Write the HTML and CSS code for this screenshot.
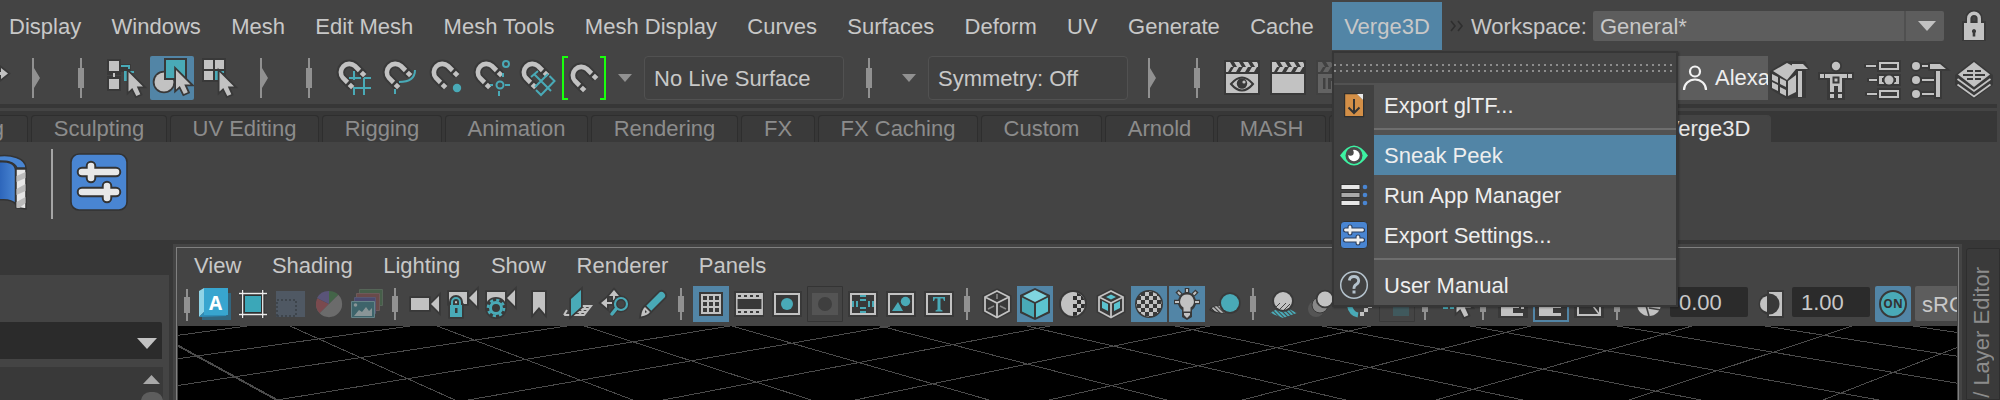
FILE: index.html
```html
<!DOCTYPE html>
<html lang="en">
<head>
<meta charset="utf-8">
<title>Verge3D menu</title>
<link rel="stylesheet" href="styles.css">
</head>
<body>
<svg class="defs" width="0" height="0">
  <defs>
    <g id="mag">
      <path class="halo" d="M364 75L355 66A8.5 8.5 0 0 0 343 78L352 87"/>
      <path class="mag-body" d="M359.5 70.5L355 66A8.5 8.5 0 0 0 343 78L347.5 82.5"/>
      <path class="mag-body" d="M361.3 72.3l3.4 3.4M349.3 84.3l3.4 3.4"/>
    </g>
    <path id="cur" class="g o" d="M128.5 72V91.5L132.3 88L136.3 96L140.3 94.2L136.8 86.4H143Z"/>
    <path id="handle" class="h" d="M2 0h2v10h2v20h-2v10h-2v-10h-2v-20h2z"/>
    <path id="vhandle" class="h" d="M2 0h2v8h2v16h-2v8h-2v-8h-2v-16h2z"/>
    <path id="collapse" class="h" d="M0 0h2v10l6 10l-6 10v10h-2z"/>
    <g id="clap">
      <path class="k" d="M1224 60h36v35h-36z"/>
      <path class="g" d="M1226 74h32v19h-32z"/>
      <path class="g" d="M1226 62h4l3 5h-7zM1234 62h5l3 5h-5zM1243 62h5l3 5h-5zM1252 62h5l1 2v3h-3zM1226 67h5l-3 5h-2zM1234 67h5l-3 5h-5zM1243 67h5l-3 5h-5zM1252 67h5l-3 5h-5z"/>
    </g>
    <g id="sliders">
      <path class="sl-o" d="M82 172h34M91 166v12M82 192h34M107 186v12"/>
      <path class="sl" d="M82 172h34M91 166v12M82 192h34M107 186v12"/>
    </g>
    <pattern id="chk" width="8" height="8" x="1149" y="304" patternUnits="userSpaceOnUse"><path fill="#c2c2c2" d="M0 0h4v4h4v4h-4v-4h-4z"/></pattern>
    <pattern id="chk2" width="8" height="8" x="1073" y="304" patternUnits="userSpaceOnUse"><path fill="#2e2e2e" d="M0 0h4v4h4v4h-4v-4h-4z"/></pattern>
    <pattern id="hat" width="3" height="3" patternTransform="rotate(-45)" patternUnits="userSpaceOnUse"><path fill="#c2c2c2" d="M0 0h1.8v3h-1.8z"/></pattern>
    <pattern id="hatt" width="3" height="3" patternTransform="rotate(-45)" patternUnits="userSpaceOnUse"><path fill="#49aab7" d="M0 0h2v3h-2z"/></pattern>
    <linearGradient id="blu"><stop offset="0" stop-color="#2a62b8"/><stop offset="1" stop-color="#4985d2"/></linearGradient>
  </defs>
</svg>

<div class="app">
  <header class="menubar">
    <nav class="menus">
      <span>Display</span><span>Windows</span><span>Mesh</span><span>Edit Mesh</span><span>Mesh Tools</span><span>Mesh Display</span><span>Curves</span><span>Surfaces</span><span>Deform</span><span>UV</span><span>Generate</span><span>Cache</span><span class="open">Verge3D</span>
    </nav>
    <svg class="more" width="14" height="12" viewBox="0 0 14 12"><path d="M1 1l4 5l-4 5M8 1l4 5l-4 5"/></svg>
    <span class="ws-label">Workspace:</span>
    <div class="ws-select"><span>General*</span><i><svg width="18" height="10" viewBox="0 0 18 10"><path class="g" d="M0 0h18l-9 10z"/></svg></i></div>
    <svg class="lock" width="24" height="32" viewBox="1962 11 24 32"><path class="k" d="M1962 22h24v20h-24z"/><path fill="none" stroke="#393939" stroke-width="7" d="M1969 26v-7a5 5 0 0 1 10 0v7"/><path fill="none" stroke="#c2c2c2" stroke-width="3.4" d="M1968.700 26v-6.500a5.300 5.300 0 0 1 10.600 0v6.500"/><path class="g" d="M1964 24h20v17h-20z"/><path class="k" d="M1974 30a2.300 2.300 0 0 1 1.300 4v3.500h-2.600v-3.500a2.300 2.300 0 0 1 1.300-4z"/></svg>
  </header>

  <section class="toolbar">
    <svg width="100" height="44" viewBox="0 56 100 44"><path class="g o" d="M-4 72h5v-4l7 5.500l-7 5.500v-4h-5z"/><use href="#collapse" x="32" y="58"/><use href="#handle" x="78" y="58"/></svg>
    <svg width="50" height="44" viewBox="100 56 50 44"><path class="k" d="M107 59h14v16h-14zM107 76h14v15h-14z"/><path class="g" d="M109 61h10v10h-10zM109 79h10v10h-10zM113 73h2v4h-2z"/><path class="k" d="M120 64h11v8h-11z"/><path class="t" d="M121 65h9v2h-9zM128 65h2v4h-2zM124 71h10v2h-7v8h-3z"/><use href="#cur"/></svg>
    <svg class="on" width="44" height="44" viewBox="150 56 44 44"><circle class="g o" cx="164" cy="82" r="9.500"/><path class="k" d="M164 58h23v22h-23z"/><path class="t" d="M166 60h19v18h-19z"/><use href="#cur" x="47.500" y="-2"/></svg>
    <svg width="136" height="44" viewBox="194 56 136 44"><path class="k" d="M202 58h24v24h-24z"/><path class="g" d="M204 60h9v9h-9zM215 60h9v9h-9zM204 71h9v9h-9z"/><path class="t" d="M215 71h9v2h-6v7h-3z"/><use href="#cur" x="91"/><use href="#collapse" x="260" y="58"/><use href="#handle" x="306" y="58"/></svg>
    <svg width="46" height="44" viewBox="330 56 46 44"><use href="#mag"/><path class="ts" d="M354 71v9M349 78h12M364 78h7M354 91v4M364 78v17M353 88h18M354 88v3M349 78h9"/></svg>
    <svg width="46" height="44" viewBox="376 56 46 44"><use href="#mag" x="46"/><path class="ts" d="M415 70c0 8-5 12-16 12M395 89v5"/></svg>
    <svg width="46" height="44" viewBox="422 56 46 44"><use href="#mag" x="93"/><circle class="t" cx="457" cy="88" r="4.200"/></svg>
    <svg width="46" height="44" viewBox="468 56 46 44"><use href="#mag" x="137"/><g class="ts"><circle cx="506" cy="64" r="3"/><circle cx="500" cy="85" r="3.500"/><path d="M505 85h5M493 85h-3M499 91v5M503 73v4" stroke-dasharray="5 2"/></g></svg>
    <svg width="48" height="44" viewBox="514 56 48 44"><use href="#mag" x="183"/><path class="ts" d="M531 77l7-6M534 74l17 17M541 81l-6 6M541 81l7-7M536 90l5 5l13.500-14l-5-5"/></svg>
    <svg width="44" height="44" viewBox="562 56 44 44"><path fill="none" stroke="#19ff0c" stroke-width="2" d="M568 57h-5v42h5M600 57h5v42h-5"/><use href="#mag" x="232" y="3"/></svg>
    <svg width="38" height="44" viewBox="606 56 38 44"><path fill="#919191" d="M618 74h14l-7 8z"/></svg>
    <div class="field">No Live Surface</div>
    <svg width="84" height="44" viewBox="844 56 84 44"><use href="#handle" x="866" y="58"/><path fill="#919191" d="M902 74h14l-7 8z"/></svg>
    <div class="field">Symmetry: Off</div>
    <svg width="92" height="44" viewBox="1128 56 92 44"><use href="#collapse" x="1148" y="58"/><use href="#handle" x="1194" y="58"/></svg>
    <svg width="46" height="44" viewBox="1220 56 46 44"><use href="#clap"/><path d="M1231 84q11-13 22 0q-11 13-22 0z" fill="#c2c2c2" stroke="#393939" stroke-width="2"/><circle class="k" cx="1242" cy="83.500" r="5.200"/><circle class="g" cx="1244" cy="82" r="1.600"/></svg>
    <svg width="46" height="44" viewBox="1266 56 46 44"><use href="#clap" x="46"/></svg>
    <svg width="366" height="44" viewBox="1312 56 366 44"><g opacity=".25"><use href="#clap" x="92"/><path class="k" d="M1323 78h2.500v11h-2.500zM1328 78h6v3h-3v8h-3z"/></g></svg>
    <div class="user"><svg width="26" height="28" viewBox="0 0 26 28"><g fill="none" stroke="#f2f2f2" stroke-width="2.200"><circle cx="13" cy="7.500" r="5"/><path d="M2 26a11 10.500 0 0 1 22 0"/></g></svg><span>Alexa</span></div>
    <svg width="45" height="44" viewBox="1768 56 45 44"><path class="k" d="M1770 71l16-10h19l5 9h-4v28h-10l-9 1l-17-10z"/><path class="g" d="M1773 71l14-8l5 2.500v3.500h4l-9 11zM1772 74l6 3v6l-6-3zM1780 78l6 3v6l-6-3zM1772 82l6 3v6l-6-3zM1780 87l6 3v6l-6-3zM1788 81l8-6v17l-8 4zM1792 64h11l5 5h-16zM1798 71h4v26h-4z"/></svg>
    <svg width="46" height="44" viewBox="1813 56 46 44"><circle class="k" cx="1836" cy="66" r="6"/><path class="k" d="M1818 72h36v8h-9v20h-18v-20h-9z"/><circle class="g" cx="1836" cy="66" r="4.200"/><path class="g" d="M1820 74h4v4h-4zM1848 74h4v4h-4zM1825 74h22v4h-5v14h-4v-6h-4v6h-4v-14h-5zM1830 94h4v4h-4zM1838 94h4v4h-4z"/><path class="k" d="M1832.500 76.500h7v7h-7z"/><path class="g" d="M1834.500 78.500h3v3h-3z"/></svg>
    <svg width="46" height="44" viewBox="1859 56 46 44"><path class="k" d="M1864 64h14v4h-14zM1867 78h10v4h-10zM1865 92h12v4h-12zM1877 60h24v12h-24zM1877 74h24v12h-24zM1877 88h24v12h-24z"/><path class="g" d="M1866 65h10v2h-10zM1869 79h8v2h-8zM1867 93h10v2h-10zM1879 62h20v8h-20zM1879 76h20v8h-20zM1879 90h20v8h-20z"/><path class="k" d="M1881 64h16v4h-16zM1881 92h16v4h-16zM1882 78h14v4h-14z"/><circle class="g o" cx="1889" cy="80" r="4.500"/></svg>
    <svg width="46" height="44" viewBox="1905 56 46 44"><path class="g o" d="M1922 65h6v2h-6zM1922 79h12v2h-12zM1922 93h12v2h-12zM1930 64h10l6 5h-16z"/><path class="k" d="M1934 71h8v28h-8z"/><path class="g" d="M1936 71h4v26h-4z"/><circle class="g o" cx="1916" cy="66" r="4"/><circle class="g o" cx="1916" cy="80" r="4"/><circle class="g o" cx="1916" cy="94" r="4"/></svg>
    <svg width="46" height="44" viewBox="1951 56 46 44"><path class="k" d="M1974 60l19 15v10l-19 14l-19-14v-10z"/><path class="g" d="M1974 62l16 12.500l-16 12.500l-16-12.500z"/><path fill="none" stroke="#c2c2c2" stroke-width="1.800" d="M1957.500 79l16.500 12l16.500-12M1957.500 84.500l16.500 12l16.500-12"/><path class="k" d="M1967 70h6v2h-6zM1975 70h6v2h-6zM1963 74h10v2h-10zM1975 74h10v2h-10zM1967 78h6v2h-6zM1975 78h6v2h-6z"/></svg>
  </section>

  <div class="tabs">
    <span class="w0">g</span><span class="w1">Sculpting</span><span class="w2">UV Editing</span><span class="w3">Rigging</span><span class="w4">Animation</span><span class="w5">Rendering</span><span class="w6">FX</span><span class="w7">FX Caching</span><span class="w8">Custom</span><span class="w9">Arnold</span><span class="w10">MASH</span><span class="w11"></span><span class="active">Verge3D</span>
  </div>

  <section class="shelf">
    <svg width="50" height="98" viewBox="0 142 50 98"><path fill="#4985d2" stroke="#333" stroke-width="1.500" d="M-2 156C10 154 26 158 26 168h-9C14 161 6 161-2 161z"/><path fill="url(#blu)" stroke="#333" stroke-width="1.500" d="M-2 162c10-1 17 1 17.500 8v34c-3-4-9-5-17.500-4z"/><path fill="#e6e6e6" stroke="#333" stroke-width="1.500" d="M16 169h10v40l-10-1.500z"/><path fill="#bbb" d="M16.500 176l9-4v6l-9 4zM16.500 189l9-5v7l-9 4zM16.500 202l9-5v6l-6 5h-3z"/></svg>
    <i class="shelf-line"></i>
    <svg width="80" height="98" viewBox="53 142 80 98"><rect x="71" y="154" width="56" height="56" rx="8" fill="#4985d2" stroke="#323232" stroke-width="1.600"/><use href="#sliders"/></svg>
  </section>

  <main class="work">
    <aside class="left">
      <div class="head"></div>
      <div class="panel">
        <div class="drop"><svg width="20" height="11" viewBox="0 0 20 11"><path class="g" d="M0 0h20l-10 11z"/></svg></div>
        <div class="scroll"><svg width="17" height="9" viewBox="0 0 17 9"><path fill="#a8a8a8" d="M0 9h17l-8.500-9z"/></svg><i></i></div>
      </div>
    </aside>

    <section class="frame">
      <div class="view">
        <nav class="vmenus"><span>View</span><span>Shading</span><span>Lighting</span><span>Show</span><span>Renderer</span><span>Panels</span></nav>
        <div class="vbar">
          <svg width="17" height="40" viewBox="178 284 17 40"><use href="#vhandle" x="184" y="289"/></svg>
          <div class="badge"><svg width="40" height="40" viewBox="195 284 40 40"><path fill="#32667f" d="M202 293h29v27h-29z"/><path fill="#8fd3e6" d="M199 291l5-3v24l-5 5z"/><path fill="#2e8db8" d="M199 317l5-5h24l-2 4z"/><path fill="#38a5cf" d="M204 288h24v27h-24z"/></svg><b>A</b></div>
          <svg width="38" height="40" viewBox="235 284 38 40"><path fill="none" stroke="#2f2f2f" stroke-width="3" d="M243 290v28M263 290v28M239 294h28M239 314h28"/><path fill="#3ba7b8" stroke="#2f2f2f" d="M244.500 295.500h17v17h-17z"/><path fill="none" stroke="#ececec" stroke-width="1.300" d="M242.600 290v28M262.700 290v28M239 293.500h28M239 314.500h28"/></svg>
          <svg width="38" height="40" viewBox="273 284 38 40"><path fill="#4f5863" d="M276 291h29v26h-29z"/><path fill="none" stroke="#3a3f46" stroke-dasharray="2 2" stroke-width="1.500" d="M277 316v-16h19v16z"/></svg>
          <svg width="38" height="40" viewBox="311 284 38 40"><path fill="#5f6868" d="M329 304l-9.300 9.300a13 13 0 0 1-3.700-9.300z"/><path fill="#7a4a4e" d="M329 304l-9.300 9.300a13 13 0 0 1-2.500-15z"/><path fill="#5a5478" d="M329 304l-12-6a13 13 0 0 1 12-7z"/><path fill="#436448" d="M329 304v-13a13 13 0 0 1 9.300 3.700z"/><path fill="#6b6b6b" d="M329 304l9.300-9.300a13 13 0 0 1-18.600 18.600z"/></svg>
          <svg width="38" height="40" viewBox="349 284 38 40"><g opacity=".85"><path fill="#47634b" stroke="#5a6b5c" d="M359.500 289.500h23v16h-23z"/><path fill="#704c4c" stroke="#755f5f" d="M356.500 293.500h23v17h-23z"/><path fill="#4c4c78" stroke="#5c5c7c" d="M354.500 297.500h21v16h-21z"/><path fill="#3d6a72" stroke="#6d8f94" d="M351.500 301.500h23v16h-23z"/><path fill="#96a4a6" d="M354 316l5-6l3 2l4-5l3 4l3-3v8z"/><circle fill="#96a4a6" cx="355.500" cy="305" r="1.800"/></g></svg>
          <svg width="18" height="40" viewBox="387 284 18 40"><use href="#vhandle" x="392" y="288"/></svg>
          <svg width="38" height="40" viewBox="405 284 38 40"><path class="g o" d="M411 298h18v12h-18zM431 304l8-8v16z"/></svg>
          <svg width="38" height="40" viewBox="443 284 38 40"><path class="g o" d="M449 292h18v12h-18zM469 298l8-8v16z"/><path fill="none" stroke="#393939" stroke-width="6" d="M452 305v-3a4 4 0 0 1 8 0v3"/><path class="t o" d="M450 305h12v12h-12z"/><path class="ts" d="M452 305v-3a4 4 0 0 1 8 0v3"/><path class="k" d="M455 308h2.500v5h-2.500z"/></svg>
          <svg width="38" height="40" viewBox="481 284 38 40"><path class="g o" d="M487 292h18v12h-18zM507 298l8-8v16z"/><circle class="k" cx="496" cy="308" r="11"/><circle cx="496" cy="308" r="8" fill="none" stroke="#49aab7" stroke-width="2.600" stroke-dasharray="3.100 3.180"/><circle cx="496" cy="308" r="5.500" fill="none" stroke="#49aab7" stroke-width="3"/></svg>
          <svg width="38" height="40" viewBox="519 284 38 40"><path class="g o" d="M533 292h12v22l-6-7l-6 7z"/></svg>
          <svg width="38" height="40" viewBox="557 284 38 40"><path fill="none" stroke="#c2c2c2" stroke-width="2" d="M564 315h20l7-9h-11M576 309h12M574 312h12M567 310l-3 5M579 315l7-9M572 315l6-7"/><path class="t o" d="M571 299l10-9v17l-10 9z"/></svg>
          <svg width="38" height="40" viewBox="595 284 38 40"><path class="g o" d="M601 303l6-5v4h5v2h-5v4zM614 290l5 6h-4v4h-2v-4h-4z"/><circle cx="621" cy="304" r="6" fill="none" stroke="#393939" stroke-width="5"/><path stroke="#393939" stroke-width="6" d="M616 309l-5 5"/><circle cx="621" cy="304" r="6" fill="none" stroke="#49aab7" stroke-width="2.200"/><path stroke="#49aab7" stroke-width="3.500" stroke-linecap="round" d="M616 309l-4 5"/></svg>
          <svg width="38" height="40" viewBox="633 284 38 40"><path class="t o" d="M646 306l14-14q2-1 4 1t1 4l-14 14z"/><path class="g o" d="M645 307l5 5q-2 3-9 4.500q1-7 4-9.500z"/><path class="k" d="M645 310l2 2l-2 1z"/></svg>
          <svg width="20" height="40" viewBox="671 284 20 40"><use href="#vhandle" x="678" y="288"/></svg>
          <svg width="40" height="40" viewBox="691 284 40 40"><path class="onb" d="M693 286h36v36h-36z"/><path class="k" d="M699 292h24v24h-24z"/><path class="g" fill-rule="evenodd" d="M701 294h20v20h-20zM703 296v4h4v-4zM709 296v4h4v-4zM715 296v4h4v-4zM703 302v4h4v-4zM709 302v4h4v-4zM715 302v4h4v-4zM703 308v4h4v-4zM709 308v4h4v-4zM715 308v4h4v-4z"/></svg>
          <svg width="38" height="40" viewBox="731 284 38 40"><path class="k" d="M734 291h30v26h-30z"/><path fill="none" stroke="#c2c2c2" stroke-width="1.500" d="M736.800 293.800h25.400v20.400h-25.400z"/><path class="g" d="M736 293h26v6h-26zM736 309h26v6h-26z"/><path stroke="#393939" stroke-width="2" stroke-dasharray="3 3" d="M738 296h23M738 312h23"/></svg>
          <svg width="38" height="40" viewBox="769 284 38 40"><path class="k" d="M772 291h30v26h-30z"/><path class="fr" d="M775 294h24v20h-24z"/><circle class="t" cx="787" cy="304" r="6"/></svg>
          <svg width="38" height="40" viewBox="807 284 38 40"><path fill="none" stroke="#343434" d="M807.500 286.500h35v35h-35z"/><path fill="#545454" d="M812 293h26v22h-26z"/><circle cx="825" cy="304" r="7" fill="#3f3f3f"/></svg>
          <svg width="38" height="40" viewBox="845 284 38 40"><path class="k" d="M848 291h30v26h-30z"/><path class="fr" d="M851 294h24v20h-24z"/><path class="t" d="M860 295h6v2h-6zM860 299h6v2h-6zM860 307h6v2h-6zM860 311h6v2h-6zM852 301h2v6h-2zM856 301h2v6h-2zM868 301h2v6h-2zM872 301h2v6h-2z"/></svg>
          <svg width="38" height="40" viewBox="883 284 38 40"><path class="k" d="M886 291h30v26h-30z"/><path class="fr" d="M889 294h24v20h-24z"/><path class="t" d="M892 311l6-9l5 9z"/><circle class="t" cx="905.500" cy="301.500" r="4.700"/></svg>
          <svg width="38" height="40" viewBox="921 284 38 40"><path class="k" d="M924 291h30v26h-30z"/><path class="fr" d="M927 294h24v20h-24z"/><path class="t" d="M933 297h12v4h-1l-1-2.500h-2.500v11l2 1v1h-7v-1l2-1v-11h-2.500l-1 2.500h-1z"/></svg>
          <svg width="20" height="40" viewBox="959 284 20 40"><use href="#vhandle" x="964" y="288"/></svg>
          <svg width="36" height="40" viewBox="979 284 36 40"><g id="cube"><path fill="#393939" stroke="#393939" stroke-width="5" d="M997 291l12 6v14l-12 6l-12-6v-14z"/><path fill="none" stroke="#c2c2c2" stroke-width="1.800" d="M997 291l12 6v14l-12 6.500l-12-6.500v-14zM985 297l12 6l12-6M997 303v14"/></g><path stroke="#888" stroke-width="1.600" d="M997 294v5M988 309l6-3M1006 309l-6-3"/></svg>
          <svg width="40" height="40" viewBox="1015 284 40 40"><path class="onb" d="M1017 286h36v36h-36z"/><path class="k" d="M1035 288l15 7v18l-15 7l-15-7v-18z"/><path fill="#7fd5e0" d="M1035 290l12 6l-12 6l-12-6z"/><path fill="#49aab7" d="M1022 297.500l12 6v14l-12-6z"/><path fill="#5bc3d0" d="M1048 297.500l-12 6v14l12-6z"/></svg>
          <svg width="38" height="40" viewBox="1055 284 38 40"><circle class="k" cx="1073" cy="304" r="14"/><circle class="g" cx="1073" cy="304" r="12"/><path fill="url(#chk2)" d="M1073 292a12 12 0 0 1 0 24z"/></svg>
          <svg width="36" height="40" viewBox="1093 284 36 40"><use href="#cube" x="114"/><path fill="#5bc3d0" d="M1111 294.500l5 2.500l-5 2.500l-5-2.500zM1102 301l6 3v7l-6-3zM1120 301l-6 3v7l6-3z"/></svg>
          <svg width="39" height="40" viewBox="1129 284 39 40"><path class="onb" d="M1131 286h36v36h-36z"/><circle class="k" cx="1149" cy="304" r="14"/><circle fill="url(#chk)" cx="1149" cy="304" r="12.500"/></svg>
          <svg width="39" height="40" viewBox="1168 284 39 40"><path class="onb" d="M1169 286h36v36h-36z"/><path class="k" d="M1187 292a10 10 0 0 1 5 18v7l-5 3l-5-3v-7a10 10 0 0 1 5-18z"/><path class="g" d="M1187 294.500a7 7 0 0 1 3.500 13v4h-7v-4a7 7 0 0 1 3.500-13zM1184 313h6v2l-3 3l-3-3z"/><path stroke="#393939" stroke-width="4.500" d="M1187 288v5M1174 302h6M1194 302h6M1177 291l4 4M1197 291l-4 4"/><path stroke="#c2c2c2" stroke-width="2" d="M1187 289v3M1175 302h4M1195 302h4M1178 292l2.500 2.500M1196 292l-2.500 2.500"/></svg>
          <svg width="38" height="40" viewBox="1207 284 38 40"><path fill="#333" d="M1209 310q2-5 13-5l4 8q-10 2-17-3z"/><path fill="url(#hat)" d="M1211 309q4-4 12-3l2 7q-9 0-14-4z"/><circle class="t o" cx="1230" cy="303" r="9"/></svg>
          <svg width="18" height="40" viewBox="1245 284 18 40"><use href="#vhandle" x="1250" y="288"/></svg>
          <svg width="40" height="40" viewBox="1263 284 40 40"><path fill="url(#hatt)" d="M1270 313l7-4h12l8 4l-14 5z"/><circle class="g o" cx="1283" cy="301" r="9"/><path stroke="#444" stroke-width="1" d="M1275 308l5-5M1279 310l7-7M1284 310l6-6"/></svg>
          <svg width="38" height="40" viewBox="1303 284 38 40"><circle fill="#555" cx="1316" cy="309" r="8"/><circle fill="#888" stroke="#393939" cx="1320" cy="305" r="8"/><circle class="g o" cx="1325" cy="299" r="7.500"/></svg>
          <svg width="38" height="40" viewBox="1341 284 38 40"><path fill="none" stroke="#49aab7" stroke-width="5" d="M1349 304q2 10 9 11"/><path class="g" d="M1360 312h4v4h-4zM1364 308h4v4h-4zM1368 304h4v4h-4z"/></svg>
          <svg width="38" height="40" viewBox="1379 284 38 40"><path fill="none" stroke="#383838" d="M1379.500 286.500h35v35h-35z"/><path fill="#40595d" d="M1393 300h16v16h-16z"/></svg>
          <svg width="18" height="40" viewBox="1417 284 18 40"><use href="#vhandle" x="1422" y="288"/></svg>
          <svg width="40" height="40" viewBox="1435 284 40 40"><path class="t" d="M1443 305h5v4h-5zM1450 305h4v4h-4z"/><use href="#cur" x="1328" y="221"/></svg>
          <svg width="18" height="40" viewBox="1475 284 18 40"><use href="#vhandle" x="1480" y="288"/></svg>
          <svg width="38" height="40" viewBox="1493 284 38 40"><path class="k" d="M1498 290h30v28h-30z"/><path class="g" d="M1501 300h12v6h6v2h-6v5h10v3h-22zM1521 306h3v3h-3z"/></svg>
          <svg width="40" height="40" viewBox="1531 284 40 40"><path fill="#393939" stroke="#5285a6" stroke-width="2" d="M1534 287h34v34h-34z"/><path class="g" d="M1539 300h14v6h8v2h-8v5h8v3h-22z"/></svg>
          <svg width="38" height="40" viewBox="1571 284 38 40"><path class="k" d="M1574 290h30v28h-30z"/><path class="fr" d="M1578 294h22v21h-22z"/><path stroke="#c2c2c2" stroke-width="1.500" d="M1590 302l9 12"/></svg>
          <svg width="61" height="40" viewBox="1609 284 61 40"><use href="#vhandle" x="1614" y="288"/><circle class="g" cx="1649" cy="304" r="12"/><path stroke="#444" stroke-width="1.600" d="M1645 302l4 14M1649 308l12 2"/></svg>
          <div class="num">0.00</div>
          <svg width="44" height="40" viewBox="1748 284 44 40"><path class="k" d="M1767 290h17v28h-17z"/><path class="g" d="M1769 292h13v24h-13z"/><circle class="k" cx="1769" cy="304" r="10.500"/><path class="g" d="M1767 296v16q-7-2-7-8t7-8z"/></svg>
          <div class="num">1.00</div>
          <div class="onbtn"><b>ON</b></div>
          <div class="srgb">sRGB</div>
        </div>
        <svg class="canvas" width="1779" height="74" viewBox="178 326 1779 74">
          <path class="axis" d="M178 345.700L277 400"/>
          <path class="grid" d="M290 326L455 400M437 326L633 400M584.500 326L811 400M732 326L989 400M880 326L1167 400M1027 326L1346 400M1175 326L1523 400M1322 326L1701 400M1470 326L1879 400M1617 326L2057 400M1765 326L2235 400M1913 326L2413 400"/>
          <path class="grid" d="M247 326L178 335.300M410 326L178 358.700M567 326L178 385.500M730 326L277 400M890 326L468 400M1050 326L663 400M1210 326L855 400M1371 326L1049 400M1531 326L1242 400M1692 326L1436 400M1852 326L1629 400M2012 326L1823 400"/>
        </svg>
      </div>
    </section>

    <aside class="right"><div class="vtab"><span>/ Layer Editor</span></div></aside>
  </main>

  <div class="popup">
    <div class="tear"><i></i><i></i></div>
    <ul>
      <li><svg width="40" height="40" viewBox="1334 85 40 40"><path fill="#d38f47" stroke="#2f2f2f" stroke-width="1.200" d="M1344.600 93.600h13l6 6v17h-19z"/><path fill="#e8e8e8" d="M1357 94h6v6z"/><path fill="none" stroke="#333" stroke-width="2" d="M1354 99v14M1348.500 107.500l5.500 5.500l5.500-5.500"/></svg><span>Export glTF...</span></li>
      <li class="sep"></li>
      <li class="sel"><svg width="40" height="40" viewBox="1334 135 40 40"><path fill="#3df2a2" d="M1340 155.500q14-20 28 0q-14 20-28 0z"/><circle fill="#4a4a4a" cx="1354" cy="155.500" r="8.500"/><circle fill="#fff" cx="1354" cy="155.500" r="5.700"/><circle fill="#4a4a4a" cx="1350.500" cy="152.500" r="3.200"/></svg><span>Sneak Peek</span></li>
      <li><svg width="40" height="40" viewBox="1334 175 40 40"><path fill="#e6e6e6" stroke="#333" d="M1341 184.500h19v5h-19zM1341 200.500h19v5h-19z"/><path fill="#aaa" stroke="#333" d="M1341 192.500h19v5h-19z"/><g fill="#4985d2"><circle cx="1365" cy="187" r="2.300"/><circle cx="1365" cy="195" r="2.300"/><circle cx="1365" cy="203" r="2.300"/></g></svg><span>Run App Manager</span></li>
      <li><svg width="40" height="40" viewBox="1334 215 40 40"><rect x="1340.500" y="221.500" width="27" height="27" rx="3.500" fill="#4985d2" stroke="#333"/><path fill="none" stroke="#2d3f5c" stroke-width="5" stroke-linecap="round" d="M1345.500 230h17M1350 227v6M1345.500 240h17M1358 237v6"/><path fill="none" stroke="#eee" stroke-width="2.800" stroke-linecap="round" d="M1345.500 230h17M1350 227v6M1345.500 240h17M1358 237v6"/></svg><span>Export Settings...</span></li>
      <li class="sep"></li>
      <li><svg width="40" height="40" viewBox="1334 265 40 40"><circle cx="1354" cy="285" r="13.300" fill="none" stroke="#b4c2cc" stroke-width="1.500"/><path fill="none" stroke="#b4c2cc" stroke-width="2.800" d="M1349.300 280.500q.5-4 4.700-4t4.700 4q0 2.500-2.500 4t-2.200 4.300"/><path fill="#b4c2cc" d="M1352.500 290.500h3v3h-3z"/></svg><span>User Manual</span></li>
    </ul>
  </div>
</div>
</body>
</html>
```

FILE: styles.css
```css
* { box-sizing: border-box; }
body {
  margin: 0;
  background: #444;
  font: 22px/26px "Liberation Sans", Arial, sans-serif;
  color: #c8c8c8;
  overflow: hidden;
}
svg { display: block; flex: none; }
.defs { position: absolute; }
.app {
  position: relative;
  width: 2000px;
  height: 400px;
  display: flex;
  flex-direction: column;
  overflow: hidden;
  white-space: nowrap;
}

/* shared icon paint */
.g { fill: #c2c2c2; }
.t { fill: #49aab7; }
.k { fill: #393939; }
.h { fill: #919191; }
.o { stroke: #393939; stroke-width: 3.6px; paint-order: stroke; }
.ts { fill: none; stroke: #49aab7; stroke-width: 2px; }
.fr { fill: none; stroke: #c2c2c2; stroke-width: 2px; }
.onb { fill: #5285a6; }
.halo { fill: none; stroke: #393939; stroke-width: 8.5px; }
.mag-body { fill: none; stroke: #c2c2c2; stroke-width: 4.6px; }
.sl-o, .sl { fill: none; stroke-linecap: round; }
.sl-o { stroke: #333; stroke-width: 10.5px; }
.sl { stroke: #e8e8e8; stroke-width: 6.6px; }

/* menu bar */
.menubar { height: 50px; flex: none; display: flex; align-items: center; padding-top: 2px; }
.menus { display: flex; width: 1442px; padding-left: 9px; gap: 30.4px; flex: none; }
.menus span { height: 48px; line-height: 49px; }
.menus .open { background: #5285a6; padding: 0 12px; width: 110px; margin-left: -12px; }
.more { margin-left: 8px; fill: none; stroke: #2f2f2f; stroke-width: 1.6px; }
.ws-label { width: 122px; flex: none; margin-left: 7px; line-height: 49px; }
.ws-select {
  width: 351px; height: 30px; flex: none; background: #5d5d5d; border-radius: 2px;
  display: flex; line-height: 31px;
}
.ws-select span { flex: 1; padding-left: 7px; }
.ws-select i { width: 40px; border-left: 2px solid #505050; display: flex; align-items: center; justify-content: center; padding-left: 4px; }
.lock { margin-left: 18px; }

/* main toolbar */
.toolbar { height: 54px; flex: none; display: flex; align-items: flex-start; padding-top: 6px; }
.on { background: #5285a6; border-radius: 2px; }
.field {
  width: 200px; height: 44px; flex: none; padding-left: 9px; line-height: 43px;
  border: 1px solid #515151; border-radius: 4px; background: #414141;
}
.user { width: 90px; height: 44px; flex: none; display: flex; align-items: center; background: #5d5d5d; color: #eee; overflow: hidden; padding-left: 4px; line-height: 44px; }
.user svg { margin-right: 7px; }

/* shelf */
.tabs {
  height: 38px; flex: none; display: flex; gap: 3px; padding-top: 11px; margin-right: 3px;
  background: linear-gradient(#373737 0 4px, #444 4px 7px, #373737 7px);
  color: #8c8c8c;
}
.tabs span {
  height: 27px; line-height: 25px; text-align: center; flex: none;
  background: #3a3a3a; border: 1px solid #2e2e2e; border-bottom: 0; border-radius: 4px 4px 0 0;
}
.tabs .w0 { width: 48px; margin-left: -20px; text-align: right; padding-right: 23px; }
.tabs .w1 { width: 136px; }
.tabs .w2 { width: 149px; }
.tabs .w3 { width: 120px; }
.tabs .w4 { width: 143px; }
.tabs .w5 { width: 147px; }
.tabs .w6 { width: 74px; }
.tabs .w7 { width: 160px; }
.tabs .w8 { width: 121px; }
.tabs .w9 { width: 109px; }
.tabs .w10 { width: 109px; }
.tabs .w11 { width: 310px; }
.tabs .active { width: 129px; padding-left: 2px; background: #444; border-color: #444; color: #e8e8e8; }
.shelf { height: 98px; flex: none; display: flex; }
.shelf-line { width: 2px; height: 70px; margin: 7px 0 0 1px; background: #a5a5a5; }

/* work area */
.work { height: 160px; display: flex; background: #373737; }
.left { width: 169px; flex: none; }
.head { height: 35px; }
.panel { height: 125px; background: #444; padding-top: 47px; }
.drop { width: 162px; height: 37px; background: #2b2b2b; border-radius: 0 2px 0 0; display: flex; align-items: center; justify-content: flex-end; padding: 5px 5px 0 0; }
.scroll { width: 163px; height: 33px; margin-top: 8px; padding-top: 8px; background: #393939; display: flex; flex-direction: column; align-items: flex-end; overflow: hidden; }
.scroll svg { margin-right: 3px; }
.scroll i { width: 22px; height: 30px; flex: none; margin-top: 8px; border-radius: 9px; background: #5d5d5d; }
.frame { width: 1789px; flex: none; height: 156px; margin: 4px 0 0 4px; padding: 3px 3px 0; background: #444; }
.view { height: 160px; border: 1px solid #808080; border-bottom: 0; padding: 0 1px; overflow: hidden; }
.vmenus { display: flex; gap: 30.6px; padding-left: 16px; height: 36px; line-height: 35px; }
.vbar { display: flex; height: 42px; align-items: flex-start; overflow: hidden; }
.badge { display: grid; flex: none; }
.badge svg, .badge b { grid-area: 1 / 1; }
.badge b { font: bold 19px/38px "Noto Sans", sans-serif; color: #fff; padding-left: 14px; }
.num { width: 78px; height: 30px; margin-top: 3px; flex: none; padding-left: 9px; line-height: 31px; background: #2b2b2b; border-radius: 2px; }
.onbtn { width: 36px; height: 36px; flex: none; margin: 2px 4px 0 5px; background: #5285a6; border-radius: 2px; display: grid; place-items: center; }
.onbtn b { width: 28px; height: 28px; border-radius: 50%; background: #49aab7; border: 2px solid #393939; color: #333; font: bold 12px/24px "Open Sans", sans-serif; text-align: center; }
.srgb { flex: 1; height: 35px; margin-top: 2px; padding-left: 7px; line-height: 37px; background: #5d5d5d; overflow: hidden; border-radius: 2px 0 0 2px; }
.canvas { background: #000; }
.grid, .axis { fill: none; stroke: #4b4b4b; stroke-width: 1px; shape-rendering: crispEdges; }
.axis { stroke-width: 2px; }
.right { flex: 1; padding: 8px 0 0 4px; overflow: hidden; }
.vtab { height: 152px; background: #3a3a3a; border: 1px solid #2e2e2e; border-radius: 3px 0 0 0; color: #8c8c8c; padding: 18px 0 0 3px; }
.vtab span { display: block; writing-mode: vertical-rl; transform: rotate(180deg); line-height: 24px; width: 24px; }

/* drop-down menu */
.popup {
  position: absolute; left: 1332px; top: 51px; width: 346px; height: 256px;
  border: 2px solid #363636; background: #525252; color: #eee;
  box-shadow: 1px 1px 2px rgba(0, 0, 0, .3);
}
.tear { height: 30px; padding-top: 11px; background: #444; }
.tear i { display: block; height: 2px; margin-bottom: 4px; background: repeating-linear-gradient(90deg, #8c8c8c 0 2px, transparent 2px 6px); }
.popup ul { margin: 0; padding: 2px 0 0; list-style: none; background: linear-gradient(90deg, #414141 40px, transparent 40px) 0 2px no-repeat; }
.popup li { display: flex; height: 40px; line-height: 42px; }
.popup li span { flex: 1; padding-left: 10px; }
.popup .sep { height: 2px; margin: 3px 0 5px 40px; background: #6e6e6e; }
.popup .sel span { background: #5285a6; }
```
